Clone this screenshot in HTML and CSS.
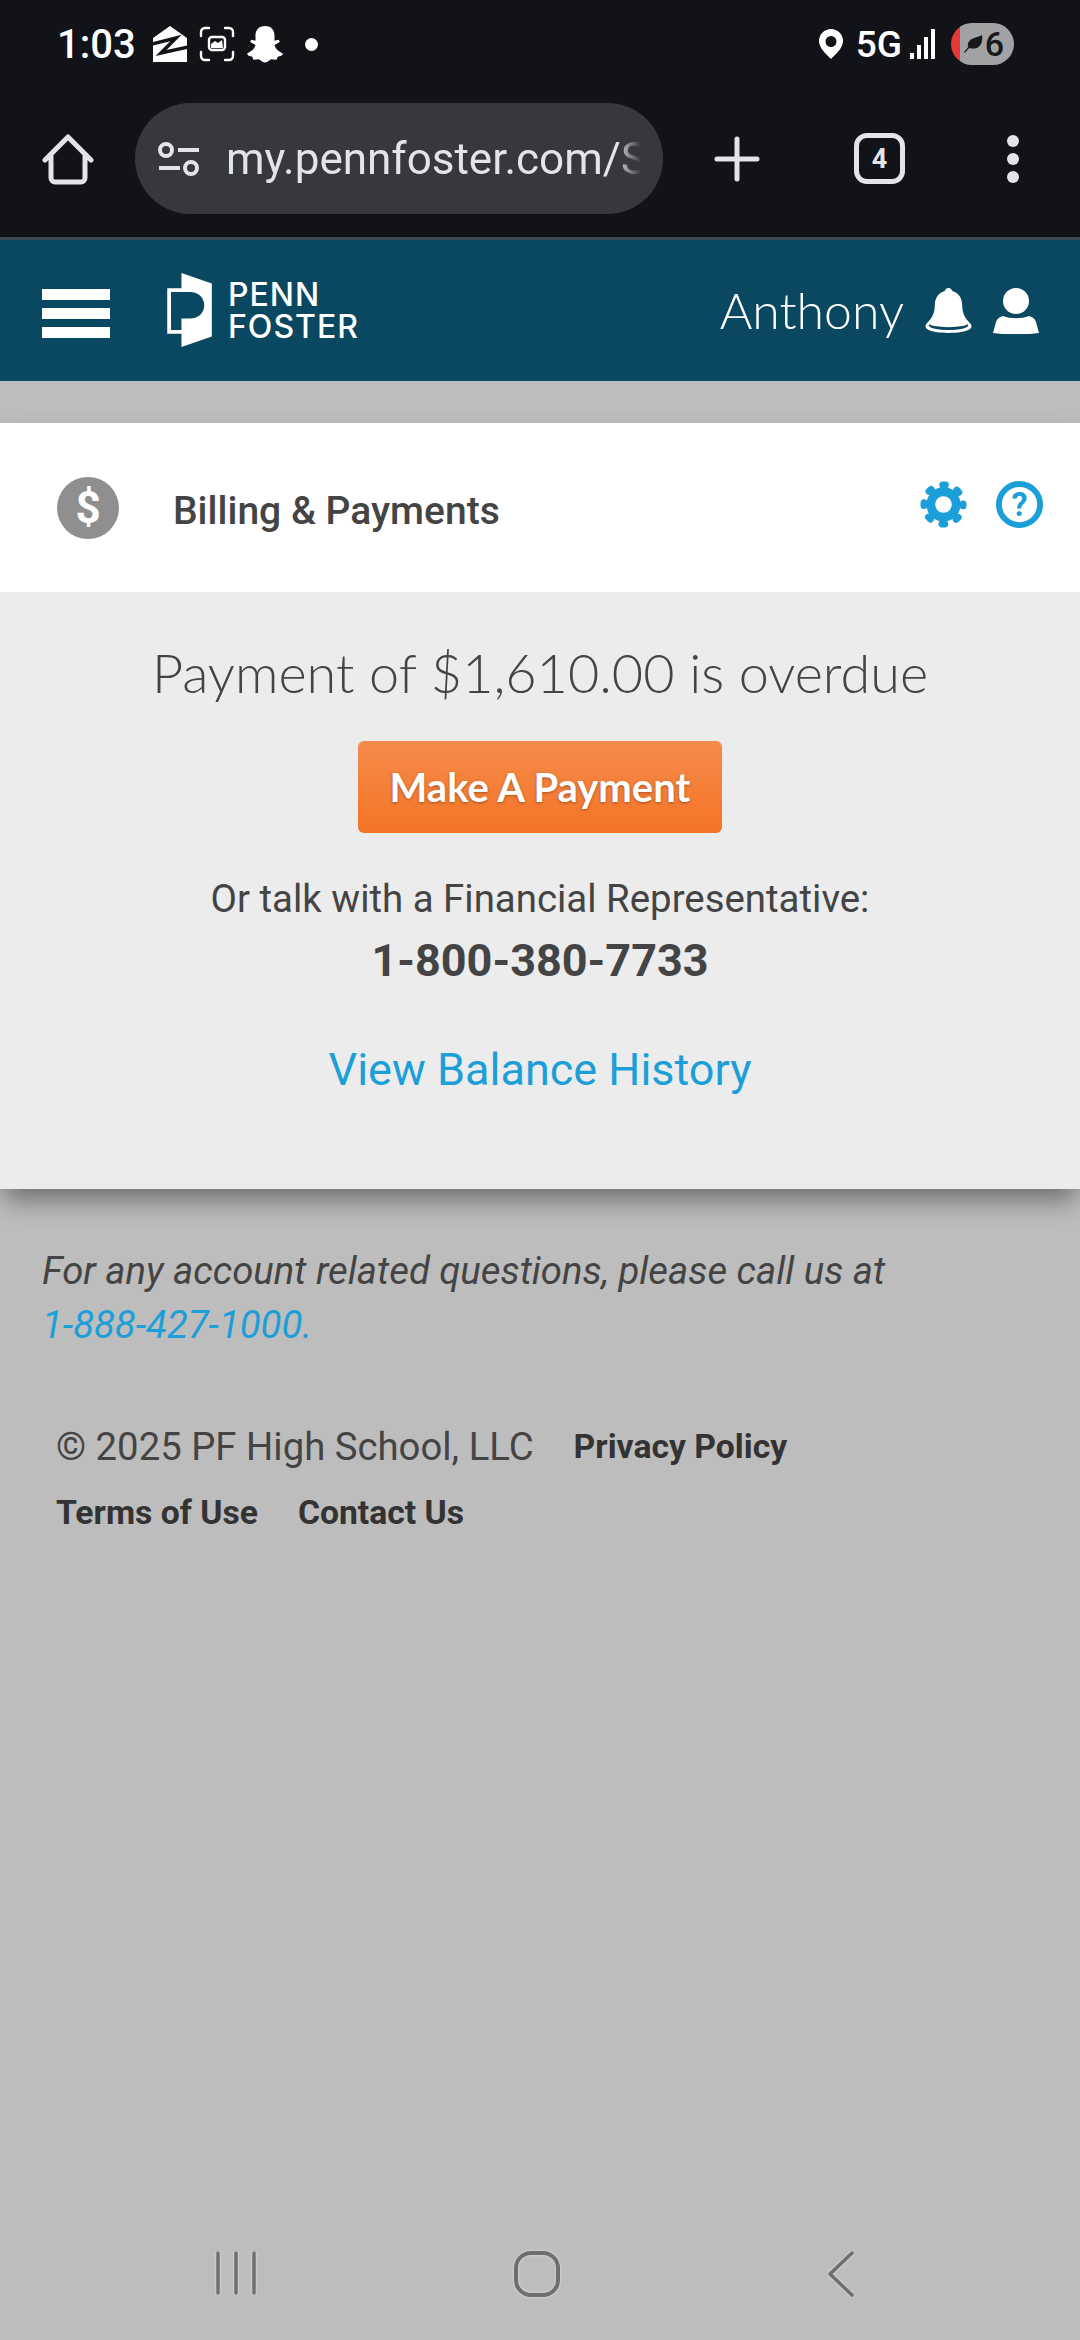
FILE: index.html
```html
<!DOCTYPE html>
<html lang="en">
<head>
    <meta charset="UTF-8">
    <meta name="viewport" content="width=device-width, initial-scale=1.0">
    <title>Billing &amp; Payments</title>
    <link rel="stylesheet" href="styles.css">
</head>
<body>
    <div class="browser">
        <div class="status-bar">
            <div class="status-left">
                <span class="time">1:03</span>
                <svg class="st-zillow" viewBox="0 0 34 36"><path fill="#fff" d="M17 0 34 12v24H0V12z"/><path fill="none" stroke="#111318" stroke-width="3.500" d="M-1 18 23 12 8 27 35 21"/></svg>
                <svg class="st-shot" viewBox="0 0 36 36" fill="none" stroke="#fff" stroke-width="2.400" stroke-linecap="round"><path d="M2 10V6a4 4 0 0 1 4-4h4M26 2h4a4 4 0 0 1 4 4v4M34 26v4a4 4 0 0 1-4 4h-4M10 34H6a4 4 0 0 1-4-4v-4"/><rect x="10" y="11" width="16" height="13" rx="3"/><path fill="#fff" stroke="none" d="M12 22v-4l4-3 3 2 4-3 1 8z"/></svg>
                <svg class="st-snap" viewBox="0 0 36 36"><path fill="#fff" d="M18 1c6 0 9 4 9 9v5l4-1 1 2-5 3c1 4 4 6 8 8l-1 2-4 1-1 3-5-.5c-2 .5-3 3-6 3s-4-2.500-6-3L7 33l-1-3-4-1-1-2c4-2 7-4 8-8l-5-3 1-2 4 1v-5c0-5 3-9 9-9z"/></svg>
                <span class="st-dot"></span>
            </div>
            <div class="status-right">
                <svg class="st-pin" viewBox="0 0 24 30"><path fill="#fff" fill-rule="evenodd" d="M12 0a12 12 0 0 1 12 12c0 7-7 13-12 18C7 25 0 19 0 12A12 12 0 0 1 12 0zm0 7a5.500 5.500 0 1 0 0 11 5.500 5.500 0 0 0 0-11z"/></svg>
                <span class="st-net">5G</span>
                <span class="signal"><i class="s1"></i><i class="s2"></i><i class="s3"></i><i class="s4"></i></span>
                <span class="battery">
                    <svg class="leaf" viewBox="0 0 22 22"><path fill="#17181c" d="M21 1c1 9-2 15-11 15-1 0-2 0-3-1L2 21l-1-1 5-6c-1-1-1-3 0-5 3-5 9-5 15-8z"/></svg>
                    <span>6</span>
                </span>
            </div>
        </div>
        <div class="toolbar">
            <svg class="tb-home" viewBox="0 0 52 52" fill="none" stroke="#e3e4ea" stroke-width="5" stroke-linejoin="round" stroke-linecap="round"><path d="M3 27 26 4l23 23M9 23v22a4 4 0 0 0 4 4h26a4 4 0 0 0 4-4V23"/></svg>
            <div class="url-bar">
                <svg class="tune" viewBox="0 0 42 36" fill="none" stroke="#e3e4ea" stroke-width="4"><circle cx="8" cy="9" r="6"/><circle cx="33" cy="27" r="6"/><path d="M20 9h21M1 27h21"/></svg>
                <span class="url-text">my.pennfoster.com/Student</span>
            </div>
            <svg class="tb-plus" viewBox="0 0 46 46" stroke="#e3e4ea" stroke-width="5" stroke-linecap="round"><path d="M23 3v40M3 23h40"/></svg>
            <span class="tabs">4</span>
            <span class="more"><i></i><i></i><i></i></span>
        </div>
    </div>

    <header class="site-header">
        <div class="hamburger"><i></i><i></i><i></i></div>
        <div class="logo">
            <svg class="logo-mark" viewBox="0 0 48 78"><path fill="#fff" fill-rule="evenodd" d="M15 0 47 11v56L15 78V64H0V16h15zM15 20H4v40h11V48h9c9 0 15-6 15-14s-6-14-15-14z"/></svg>
            <div class="logo-text"><span>PENN</span><span>FOSTER</span></div>
        </div>
        <div class="user-nav">
            <span class="user-name">Anthony</span>
            <svg class="bell" viewBox="0 0 48 46"><path fill="#fff" d="M24 0c2 0 3 1 4 3 7 2 10 8 10 15 0 8 3 13 8 18 2 2 2 4 0 6-4 3-13 4-22 4S6 45 2 42c-2-2-2-4 0-6 5-5 8-10 8-18C10 11 13 5 20 3c1-2 2-3 4-3z"/><ellipse cx="24" cy="38" rx="20" ry="5" fill="#0a4861"/><ellipse cx="24" cy="36" rx="20" ry="4" fill="#fff"/></svg>
            <svg class="person" viewBox="0 0 46 46"><circle cx="23" cy="13" r="13" fill="#fff"/><path fill="#fff" d="M10 28c8 3 18 3 26 0 4 1 6 3 7 6l3 11c-14 2-32 2-46 0l3-11c1-3 3-5 7-6z"/></svg>
        </div>
    </header>

    <main class="content">
        <section class="billing-card">
            <div class="card-title">
                <span class="dollar-badge">$</span>
                <h2>Billing &amp; Payments</h2>
                <svg class="gear" viewBox="0 0 48 48" fill="none" stroke="#1c9fd8"><circle cx="24" cy="24" r="13" stroke-width="9"/><circle cx="24" cy="24" r="20" stroke-width="7" stroke-linecap="round" stroke-dasharray="3 12.708" stroke-dashoffset="1.500"/></svg>
                <svg class="help" viewBox="0 0 48 48"><circle cx="24" cy="24" r="21" fill="none" stroke="#1c9fd8" stroke-width="6"/><text x="24" y="36" text-anchor="middle" class="help-mark">?</text></svg>
            </div>
            <div class="card-body">
                <p class="overdue">Payment of $1,610.00 is overdue</p>
                <a class="pay-btn">Make A Payment</a>
                <p class="talk">Or talk with a Financial Representative:</p>
                <p class="phone">1-800-380-7733</p>
                <a class="history">View Balance History</a>
            </div>
        </section>

        <p class="note">For any account related questions, please call us at <a>1-888-427-1000.</a></p>

        <footer class="site-footer">
            <span class="copyright">© 2025 PF High School, LLC</span>
            <a>Privacy Policy</a>
            <a>Terms of Use</a>
            <a>Contact Us</a>
        </footer>
    </main>

    <nav class="nav-bar">
        <svg class="nav-recent" viewBox="0 0 44 44" stroke="#6f6f6f" stroke-width="3.500" stroke-linecap="round"><path d="M4 2v40M22 2v40M40 2v40"/></svg>
        <svg class="nav-home" viewBox="0 0 46 46" fill="none" stroke="#6f6f6f" stroke-width="4"><rect x="2" y="2" width="42" height="42" rx="15"/></svg>
        <svg class="nav-back" viewBox="0 0 30 46" fill="none" stroke="#6f6f6f" stroke-width="3.500" stroke-linecap="round" stroke-linejoin="round"><path d="M26 2 4 23l22 21"/></svg>
    </nav>
</body>
</html>
```

FILE: styles.css
```css
* {
    box-sizing: border-box;
}
body {
    margin: 0;
    width: 1080px;
    height: 2340px;
    overflow: hidden;
    display: flex;
    flex-direction: column;
    font-family: Roboto, sans-serif;
    background-color: #bdbdbd;
    color: #444;
}
p, h2 {
    margin: 0;
}

/* phone + browser chrome */
.browser {
    height: 240px;
    background-color: #111318;
    border-bottom: 3px solid #3a4750;
}
.status-bar {
    height: 88px;
    padding: 0 66px 0 57px;
    display: flex;
    justify-content: space-between;
    align-items: center;
}
.status-left, .status-right {
    display: flex;
    align-items: center;
}
.time {
    font-size: 40px;
    font-weight: 500;
    color: #fff;
    margin-right: 17px;
}
.st-zillow {
    width: 34px;
    height: 36px;
    margin-right: 12px;
}
.st-shot {
    width: 36px;
    height: 36px;
    margin-right: 11px;
}
.st-snap {
    width: 38px;
    height: 38px;
    margin-right: 21px;
}
.st-dot {
    width: 13px;
    height: 13px;
    border-radius: 50%;
    background: #fff;
}
.st-pin {
    width: 24px;
    height: 30px;
    margin-right: 13px;
}
.st-net {
    font-size: 37px;
    font-weight: 500;
    color: #fff;
    margin-right: 8px;
}
.signal {
    display: flex;
    align-items: flex-end;
    gap: 3px;
    height: 30px;
    margin-right: 16px;
}
.signal i {
    display: block;
    width: 4px;
    background: #fff;
}
.s1 { height: 6px; }
.s2 { height: 14px; }
.s3 { height: 22px; }
.s4 { height: 30px; }
.battery {
    width: 63px;
    height: 42px;
    border-radius: 21px;
    display: flex;
    align-items: center;
    justify-content: flex-end;
    padding-right: 10px;
    gap: 2px;
    font-size: 34px;
    font-weight: 500;
    color: #17181c;
    background: linear-gradient(to right, #e53935 0, #e53935 9px, #a2a2a4 9px);
}
.leaf {
    width: 20px;
    height: 20px;
}
.toolbar {
    height: 149px;
    padding: 15px 0 0 42px;
    display: flex;
    align-items: flex-start;
}
.tb-home {
    width: 52px;
    height: 52px;
    margin: 30px 41px 0 0;
}
.url-bar {
    flex: none;
    width: 528px;
    height: 111px;
    border-radius: 56px;
    background-color: #36383d;
    display: flex;
    align-items: center;
    padding: 0 22px 0 23px;
    overflow: hidden;
}
.tune {
    flex: none;
    width: 42px;
    height: 36px;
    margin-right: 26px;
}
.url-text {
    font-size: 44px;
    color: #e3e4ea;
    white-space: nowrap;
    overflow: hidden;
    -webkit-mask-image: linear-gradient(to right, #000 94%, transparent);
    mask-image: linear-gradient(to right, #000 94%, transparent);
}
.tb-plus {
    width: 46px;
    height: 46px;
    margin: 33px 0 0 51px;
}
.tabs {
    width: 51px;
    height: 51px;
    margin: 30px 0 0 94px;
    border: 5px solid #e3e4ea;
    border-radius: 13px;
    display: flex;
    align-items: center;
    justify-content: center;
    font-size: 27px;
    font-weight: 700;
    color: #e3e4ea;
}
.more {
    display: flex;
    flex-direction: column;
    gap: 6px;
    margin: 32px 0 0 102px;
}
.more i {
    display: block;
    width: 12px;
    height: 12px;
    border-radius: 50%;
    background: #e3e4ea;
}

/* site header */
.site-header {
    height: 141px;
    flex: none;
    background-color: #0a4861;
    display: flex;
    align-items: center;
    padding: 0 41px 0 42px;
    color: white;
}
.hamburger {
    display: flex;
    flex-direction: column;
    gap: 8px;
    width: 68px;
    margin: 6px 56px 0 0;
}
.hamburger i {
    display: block;
    height: 11px;
    background: #fff;
}
.logo {
    display: flex;
    align-items: center;
}
.logo-mark {
    width: 48px;
    height: 74px;
    margin: 0 14px 2px 0;
}
.logo-text {
    display: flex;
    flex-direction: column;
    font-family: Inter, sans-serif;
    font-size: 32px;
    line-height: 32px;
    font-weight: 500;
    letter-spacing: 1px;
}
.user-nav {
    margin-left: auto;
    display: flex;
    align-items: center;
}
.user-name {
    font-family: Lato, sans-serif;
    font-weight: 300;
    font-size: 50px;
    margin: 0 21px 2px 0;
}
.bell {
    width: 47px;
    height: 47px;
    margin-right: 21px;
}
.person {
    width: 46px;
    height: 46px;
}

/* billing card */
.content {
    flex: 1;
    padding-top: 42px;
}
.billing-card {
    box-shadow: 0 14px 26px -4px rgba(0, 0, 0, 0.45);
}
.card-title {
    height: 169px;
    background: #fff;
    display: flex;
    align-items: center;
    padding: 0 37px 0 57px;
}
.dollar-badge {
    width: 62px;
    height: 62px;
    border-radius: 50%;
    background: #8f8f8f;
    color: #fff;
    font-size: 44px;
    font-weight: 700;
    display: flex;
    align-items: center;
    justify-content: center;
    margin-right: 54px;
}
.card-title h2 {
    margin-top: 7px;
    font-size: 39px;
    font-weight: 500;
    color: #444;
}
.gear {
    width: 47px;
    height: 47px;
    margin: 0 29px 6px auto;
}
.help {
    width: 47px;
    height: 47px;
    margin-bottom: 6px;
}
.help-mark {
    font-family: Roboto, sans-serif;
    font-size: 33px;
    font-weight: 700;
    fill: #1c9fd8;
}
.card-body {
    height: 597px;
    background-color: #ececec;
    display: flex;
    flex-direction: column;
    align-items: center;
    padding-top: 47px;
}
.overdue {
    font-family: Lato, sans-serif;
    font-weight: 300;
    font-size: 54px;
    line-height: 68px;
    color: #444;
}
.pay-btn {
    width: 364px;
    height: 92px;
    margin-top: 34px;
    border-radius: 6px;
    background: linear-gradient(#f58b4c, #f47425);
    color: #fff;
    font-family: Lato, sans-serif;
    font-size: 40px;
    font-weight: 700;
    text-shadow: 0 1px 3px rgba(0, 0, 0, 0.35);
    display: flex;
    align-items: center;
    justify-content: center;
}
.talk {
    margin-top: 43px;
    font-size: 38.400px;
    line-height: 46px;
    color: #444;
}
.phone {
    margin-top: 9px;
    font-size: 45px;
    line-height: 60px;
    font-weight: 700;
    color: #444;
}
.history {
    margin-top: 49px;
    font-size: 45px;
    line-height: 60px;
    color: #1c9fd8;
}

/* footer */
.note {
    margin: 55px 42px 0;
    font-size: 38.300px;
    line-height: 54px;
    font-style: italic;
    color: #444;
}
.note a {
    display: block;
    color: #1c9fd8;
}
.site-footer {
    margin: 72px 240px 0 56px;
    display: flex;
    flex-wrap: wrap;
    align-items: center;
    column-gap: 40px;
    row-gap: 24px;
    font-size: 33.700px;
    font-weight: 700;
    color: #333;
}
.copyright {
    font-size: 38.300px;
    font-weight: 400;
    color: #444;
}

/* android nav */
.nav-bar {
    flex: none;
    height: 110px;
    display: flex;
    align-items: flex-start;
    padding: 21px 224px 0 214px;
    justify-content: space-between;
}
.nav-bar svg {
    filter: drop-shadow(0 0 1.500px #e2e2e2);
}
.nav-recent {
    width: 44px;
    height: 44px;
}
.nav-home {
    width: 46px;
    height: 46px;
    margin-right: 10px;
}
.nav-back {
    width: 30px;
    height: 46px;
}
```
